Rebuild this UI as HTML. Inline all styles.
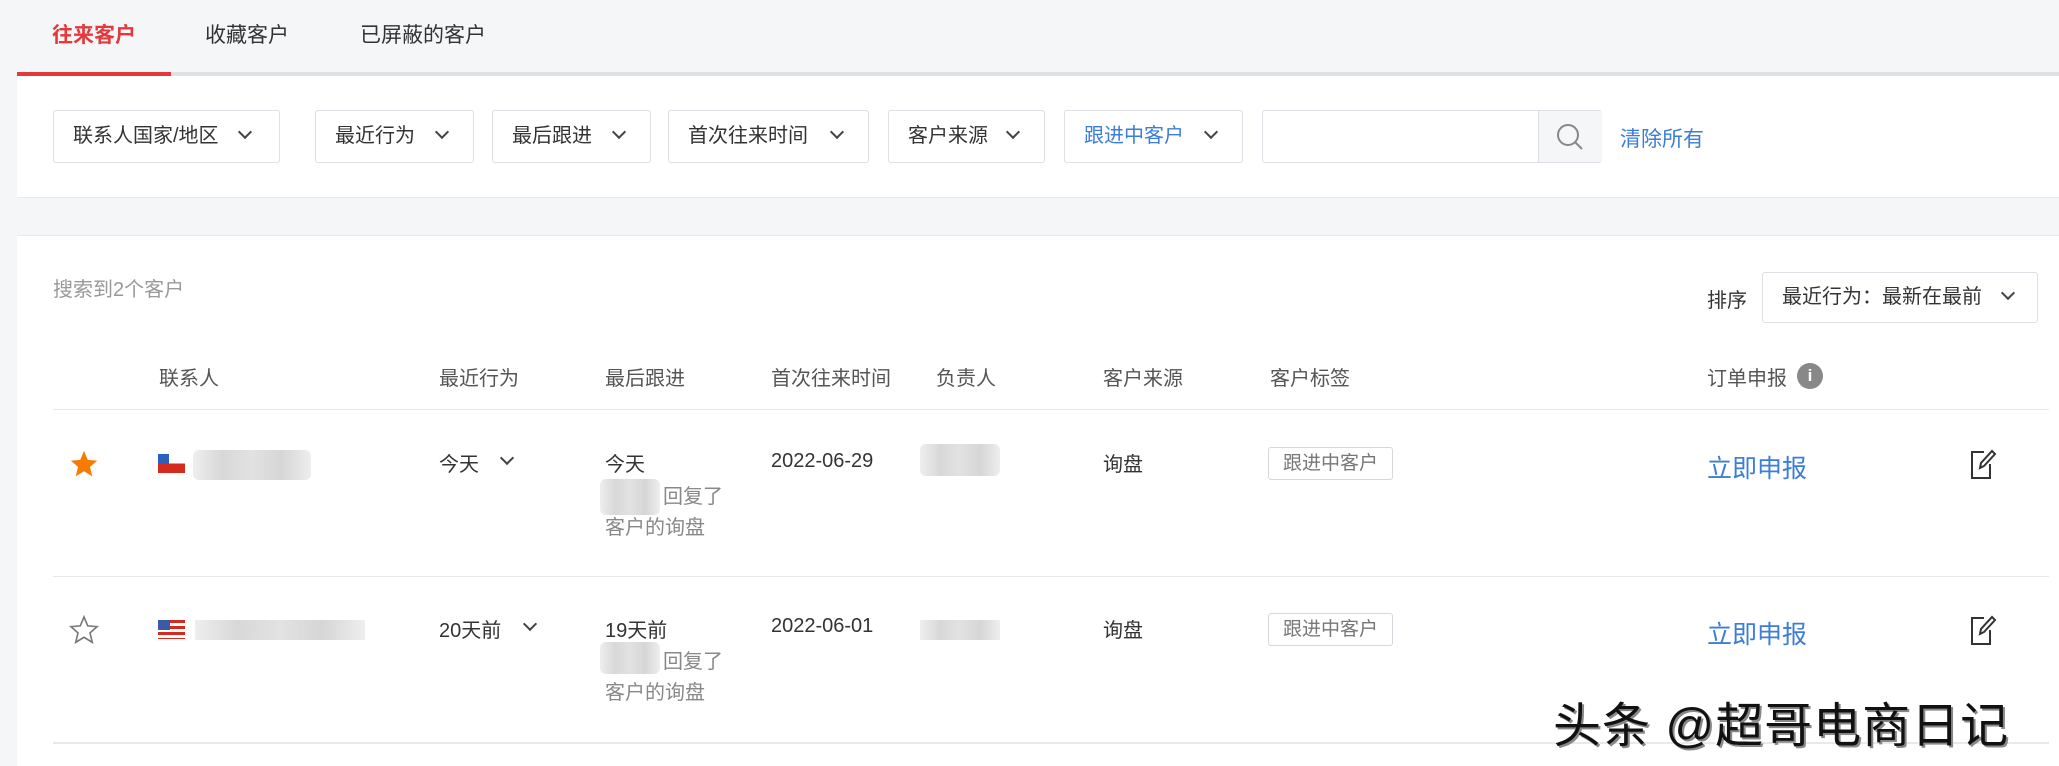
<!DOCTYPE html>
<html><head><meta charset="utf-8"><style>
*{box-sizing:border-box;margin:0;padding:0}
body{width:2059px;height:766px;overflow:hidden;background:#f5f6f8;font-family:"Liberation Sans","Noto Sans CJK SC",sans-serif;color:#333;position:relative;font-size:20px}
.a{position:absolute;white-space:nowrap}
.btn{position:absolute;top:110px;height:53px;border:1px solid #dcdfe3;border-radius:3px;background:#fff;font-size:20px;line-height:51px;padding-left:19px}
.chev{display:inline-block;width:10px;height:10px;border-right:2px solid #444;border-bottom:2px solid #444;transform:rotate(45deg);position:absolute;top:16px}
.h{position:absolute;top:362px;font-size:20px;color:#555}
.tag{position:absolute;width:125px;height:33px;border:1px solid #d5d8dc;border-radius:3px;font-size:19px;color:#777;line-height:31px;text-align:center}
.blue{color:#3b7dd8}
.blur{position:absolute;background:linear-gradient(90deg,#eee,#d8d8d8,#e2e2e2,#d6d6d6,#eee);border-radius:6px}
.sub{color:#888}
</style></head><body>
<div class="a" style="left:52px;top:19px;font-size:21px;color:#e4393c;font-weight:bold">往来客户</div>
<div class="a" style="left:205px;top:19px;font-size:21px">收藏客户</div>
<div class="a" style="left:360px;top:19px;font-size:21px">已屏蔽的客户</div>
<div class="a" style="left:17px;top:72px;width:2042px;height:4px;background:#dfe1e5"></div>
<div class="a" style="left:17px;top:72px;width:154px;height:4px;background:#e4393c"></div>
<div class="a" style="left:17px;top:76px;width:2042px;height:122px;background:#fff;border-bottom:1px solid #e8e9ec"></div>
<div class="btn" style="left:53px;width:227px">联系人国家/地区<span class="chev" style="left:186px"></span></div>
<div class="btn" style="left:315px;width:159px">最近行为<span class="chev" style="left:121px"></span></div>
<div class="btn" style="left:492px;width:159px">最后跟进<span class="chev" style="left:121px"></span></div>
<div class="btn" style="left:668px;width:201px">首次往来时间<span class="chev" style="left:163px"></span></div>
<div class="btn" style="left:888px;width:157px">客户来源<span class="chev" style="left:119px"></span></div>
<div class="btn blue" style="left:1064px;width:179px">跟进中客户<span class="chev" style="left:141px"></span></div>
<div class="btn" style="left:1262px;width:340px;padding:0"><div style="position:absolute;left:275px;top:0;width:64px;height:51px;background:#f5f6f8;border-left:1px solid #dcdfe3"></div>
<svg style="position:absolute;left:292px;top:11px" width="30" height="30" viewBox="0 0 30 30"><circle cx="13" cy="13" r="10" fill="none" stroke="#888" stroke-width="2"/><line x1="20" y1="20" x2="27" y2="27" stroke="#888" stroke-width="2"/></svg></div>
<div class="a blue" style="left:1620px;top:123px;font-size:21px">清除所有</div>
<div class="a" style="left:17px;top:235px;width:2042px;height:531px;background:#fff;border-top:1px solid #e8e9ec"></div>
<div class="a" style="left:53px;top:273px;color:#999">搜索到2个客户</div>
<div class="a" style="left:1707px;top:284px">排序</div>
<div class="a" style="left:1762px;top:272px;width:276px;height:51px;border:1px solid #dcdfe3;border-radius:3px;padding-left:19px;line-height:49px">最近行为：最新在最前<span class="chev" style="left:240px;top:15px"></span></div>
<div class="h" style="left:159px">联系人</div>
<div class="h" style="left:439px">最近行为</div>
<div class="h" style="left:605px">最后跟进</div>
<div class="h" style="left:771px">首次往来时间</div>
<div class="h" style="left:936px">负责人</div>
<div class="h" style="left:1103px">客户来源</div>
<div class="h" style="left:1270px">客户标签</div>
<div class="h" style="left:1707px">订单申报</div>
<div class="a" style="left:1797px;top:363px;width:26px;height:26px;border-radius:50%;background:#888;color:#fff;font-size:17px;text-align:center;line-height:26px;font-weight:bold">i</div>
<div class="a" style="left:53px;top:409px;width:1996px;height:1px;background:#e8e9ec"></div>
<div class="a" style="left:53px;top:576px;width:1996px;height:1px;background:#e8e9ec"></div>
<div class="a" style="left:53px;top:742px;width:1996px;height:2px;background:#e8e9ec"></div>
<!-- row 1 -->
<svg class="a" style="left:69px;top:449px" width="30" height="30" viewBox="0 0 24 24"><path d="M12 1.5l3 7.2 7.5.6-5.7 5 1.8 7.6L12 17.8l-6.6 4.1 1.8-7.6-5.7-5 7.5-.6z" fill="#f57c00"/></svg>
<div class="a" style="left:158px;top:454px;width:27px;height:19px;background:linear-gradient(#fff 50%,#d52b1e 50%)"><div style="width:11px;height:10px;background:#2b5fc0"></div></div>
<div class="blur" style="left:193px;top:450px;width:118px;height:30px"></div>
<div class="a" style="left:439px;top:448px">今天</div><span class="chev a" style="left:502px;top:453px"></span>
<div class="a" style="left:605px;top:448px">今天</div>
<div class="blur" style="left:600px;top:479px;width:60px;height:36px"></div>
<div class="a sub" style="left:663px;top:480px">回复了</div>
<div class="a sub" style="left:605px;top:511px">客户的询盘</div>
<div class="a" style="left:771px;top:450px">2022-06-29</div>
<div class="blur" style="left:920px;top:444px;width:80px;height:32px"></div>
<div class="a" style="left:1103px;top:448px">询盘</div>
<div class="tag" style="left:1268px;top:447px">跟进中客户</div>
<div class="a blue" style="left:1707px;top:449px;font-size:25px">立即申报</div>
<svg class="a" style="left:1968px;top:448px" width="30" height="32" viewBox="0 0 30 32"><path d="M16 4H4v26h18V16" fill="none" stroke="#333" stroke-width="2"/><path d="M12 20l1-5L24 3l3 3-11 12z" fill="none" stroke="#333" stroke-width="2"/></svg>
<!-- row 2 -->
<svg class="a" style="left:69px;top:615px" width="30" height="30" viewBox="0 0 24 24"><path d="M12 1.5l3 7.2 7.5.6-5.7 5 1.8 7.6L12 17.8l-6.6 4.1 1.8-7.6-5.7-5 7.5-.6z" fill="none" stroke="#777" stroke-width="1.3"/></svg>
<div class="a" style="left:158px;top:620px;width:27px;height:19px;background:repeating-linear-gradient(#d52b1e 0 3px,#fff 3px 6px)"><div style="width:12px;height:10px;background:#3c5aa6"></div></div>
<div class="blur" style="left:195px;top:620px;width:170px;height:20px;border-radius:0"></div>
<div class="a" style="left:439px;top:614px">20天前</div><span class="chev a" style="left:525px;top:619px"></span>
<div class="a" style="left:605px;top:614px">19天前</div>
<div class="blur" style="left:600px;top:642px;width:60px;height:32px"></div>
<div class="a sub" style="left:663px;top:645px">回复了</div>
<div class="a sub" style="left:605px;top:676px">客户的询盘</div>
<div class="a" style="left:771px;top:615px">2022-06-01</div>
<div class="blur" style="left:920px;top:620px;width:80px;height:20px;border-radius:0"></div>
<div class="a" style="left:1103px;top:614px">询盘</div>
<div class="tag" style="left:1268px;top:613px">跟进中客户</div>
<div class="a blue" style="left:1707px;top:615px;font-size:25px">立即申报</div>
<svg class="a" style="left:1968px;top:614px" width="30" height="32" viewBox="0 0 30 32"><path d="M16 4H4v26h18V16" fill="none" stroke="#333" stroke-width="2"/><path d="M12 20l1-5L24 3l3 3-11 12z" fill="none" stroke="#333" stroke-width="2"/></svg>
<div class="a" style="left:1553px;top:686px;font-size:48px;color:#111;letter-spacing:1px;text-shadow:2px 2px 0 #888,-1px -1px 0 #fff">头条 @超哥电商日记</div>
</body></html>
